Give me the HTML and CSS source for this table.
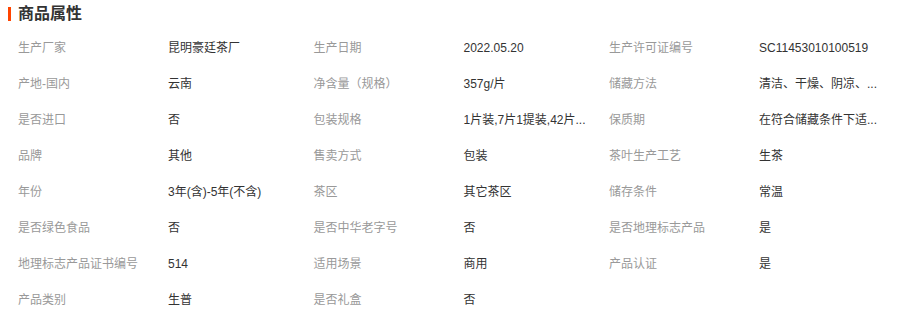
FILE: index.html
```html
<!DOCTYPE html>
<html lang="zh-CN">
<head>
<meta charset="utf-8">
<title>商品属性</title>
<link rel="stylesheet" href="styles.css">
</head>
<body>
<section class="attrs">
  <h2 class="attrs-title"><span class="bar"></span>商品属性</h2>
  <ul class="attrs-list">
    <li><span class="k">生产厂家</span><span class="v">昆明豪廷茶厂</span></li>
    <li><span class="k">生产日期</span><span class="v">2022.05.20</span></li>
    <li><span class="k">生产许可证编号</span><span class="v">SC11453010100519</span></li>
    <li><span class="k">产地-国内</span><span class="v">云南</span></li>
    <li><span class="k">净含量（规格）</span><span class="v">357g/片</span></li>
    <li><span class="k">储藏方法</span><span class="v">清洁、干燥、阴凉、...</span></li>
    <li><span class="k">是否进口</span><span class="v">否</span></li>
    <li><span class="k">包装规格</span><span class="v">1片装,7片1提装,42片...</span></li>
    <li><span class="k">保质期</span><span class="v">在符合储藏条件下适...</span></li>
    <li><span class="k">品牌</span><span class="v">其他</span></li>
    <li><span class="k">售卖方式</span><span class="v">包装</span></li>
    <li><span class="k">茶叶生产工艺</span><span class="v">生茶</span></li>
    <li><span class="k">年份</span><span class="v">3年(含)-5年(不含)</span></li>
    <li><span class="k">茶区</span><span class="v">其它茶区</span></li>
    <li><span class="k">储存条件</span><span class="v">常温</span></li>
    <li><span class="k">是否绿色食品</span><span class="v">否</span></li>
    <li><span class="k">是否中华老字号</span><span class="v">否</span></li>
    <li><span class="k">是否地理标志产品</span><span class="v">是</span></li>
    <li><span class="k">地理标志产品证书编号</span><span class="v">514</span></li>
    <li><span class="k">适用场景</span><span class="v">商用</span></li>
    <li><span class="k">产品认证</span><span class="v">是</span></li>
    <li><span class="k">产品类别</span><span class="v">生普</span></li>
    <li><span class="k">是否礼盒</span><span class="v">否</span></li>
  </ul>
</section>
</body>
</html>
```
FILE: styles.css
```css
html, body {
  margin: 0;
  padding: 0;
  background: #fff;
}
body {
  font-family: "Liberation Sans", "Noto Sans CJK SC", sans-serif;
  font-size: 12px;
  color: #333;
}
.attrs-title {
  display: flex;
  align-items: center;
  gap: 7px;
  height: 22px;
  margin: 0;
  padding: 3px 0 5px 8px;
  font-size: 16px;
  font-weight: bold;
  line-height: 22px;
  color: #333;
}
.attrs-title .bar {
  width: 3px;
  height: 14px;
  background: #ff4400;
  flex: none;
}
.attrs-list {
  list-style: none;
  margin: 0;
  padding: 0 0 0 18px;
  display: grid;
  grid-template-columns: repeat(3, 295.5px);
  grid-auto-rows: 36px;
  align-items: center;
}
.attrs-list li {
  display: flex;
  line-height: 18px;
  white-space: nowrap;
}
.k {
  width: 150px;
  flex: none;
  color: #999;
}
.v {
  color: #333;
}
```
